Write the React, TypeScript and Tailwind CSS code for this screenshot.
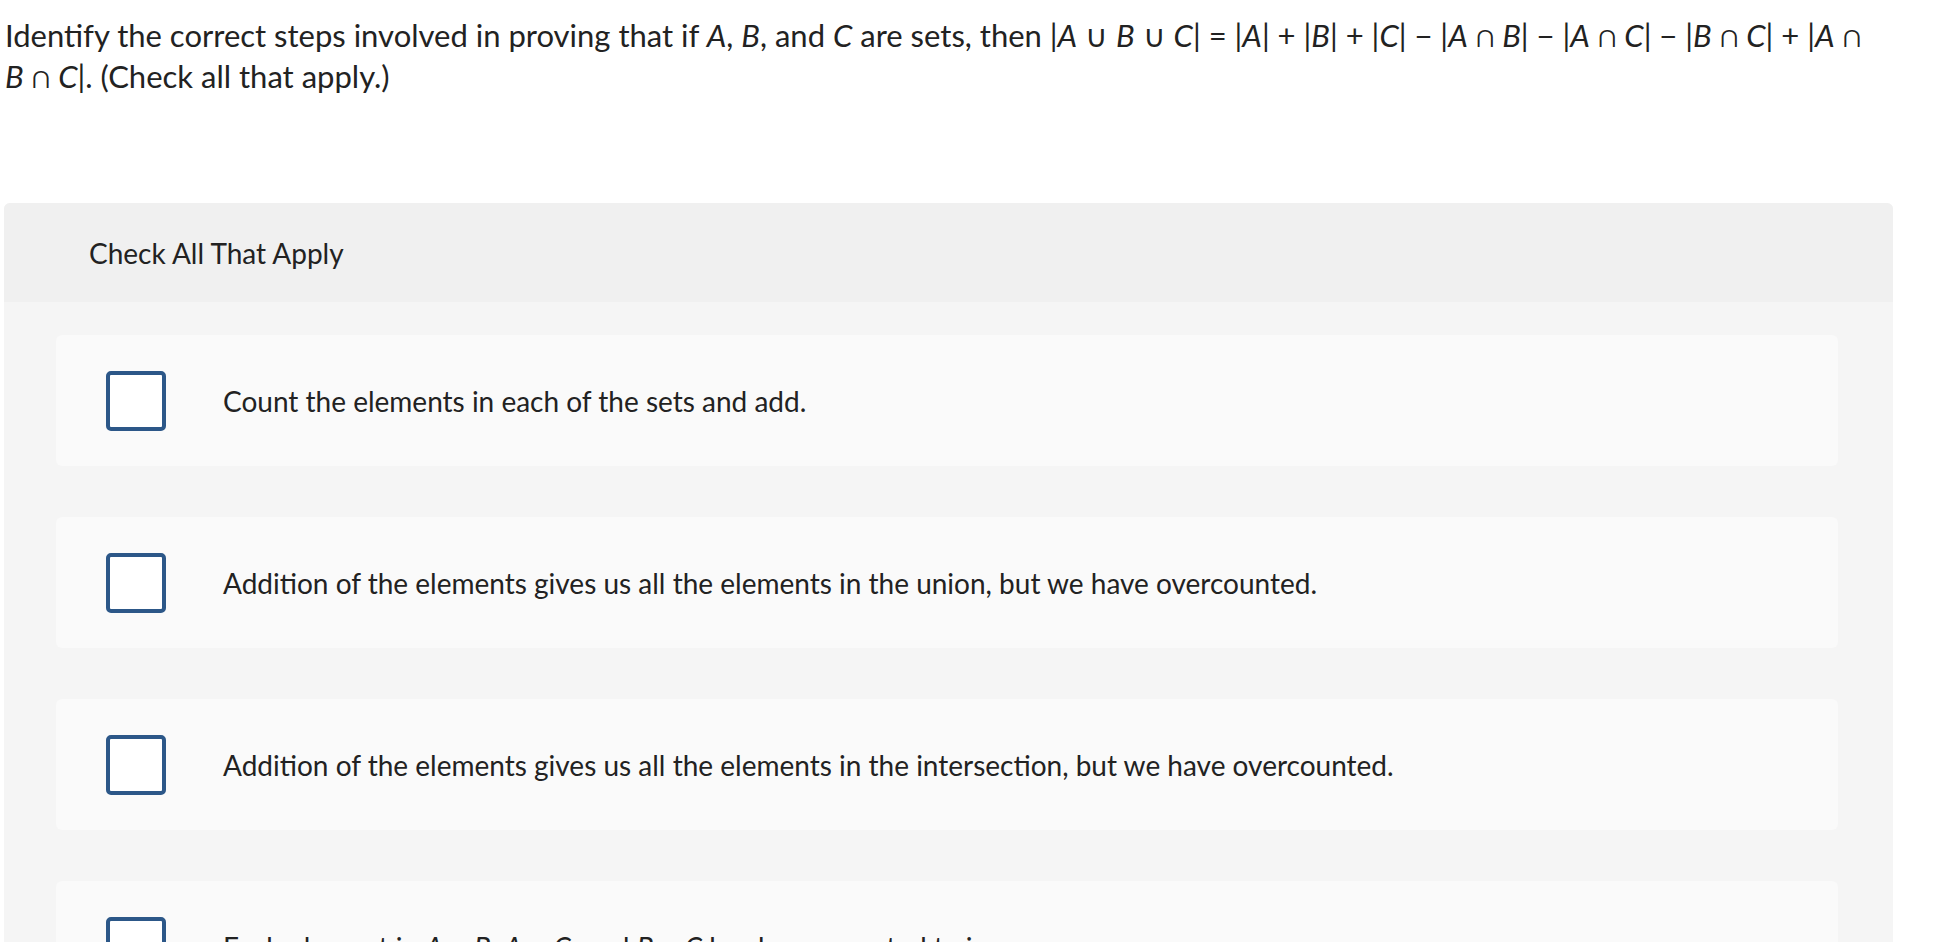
import React, { useState } from 'react';

// Small helper for the italic set letters
const V: React.FC<{ children: React.ReactNode }> = ({ children }) => (
  <i className="italic">{children}</i>
);

interface Choice {
  id: number;
  label: React.ReactNode;
}

const choices: Choice[] = [
  { id: 1, label: 'Count the elements in each of the sets and add.' },
  {
    id: 2,
    label: 'Addition of the elements gives us all the elements in the union, but we have overcounted.',
  },
  {
    id: 3,
    label: 'Addition of the elements gives us all the elements in the intersection, but we have overcounted.',
  },
  {
    id: 4,
    label: (
      <>
        Each element in <V>A</V> ∩ <V>B</V>, <V>A</V> ∩ <V>C</V>, and <V>B</V> ∩ <V>C</V> has been counted twice.
      </>
    ),
  },
];

const App: React.FC = () => {
  const [checked, setChecked] = useState<Record<number, boolean>>({});

  const toggle = (id: number) => {
    setChecked(prev => ({ ...prev, [id]: !prev[id] }));
  };

  return (
    <div className="min-h-screen bg-white text-[#222] font-['Lato','Liberation_Sans',sans-serif]">
      {/* Question */}
      <p className="pl-[5px] pt-[15px] text-[31px] leading-[41px] whitespace-nowrap">
        Identify the correct steps involved in proving that if <V>A</V>, <V>B</V>, and <V>C</V> are sets, then |<V>A</V> ∪ <V>B</V> ∪ <V>C</V>| = |<V>A</V>| + |<V>B</V>| + |<V>C</V>| − |<V>A</V> ∩ <V>B</V>| − |<V>A</V> ∩ <V>C</V>| − |<V>B</V> ∩ <V>C</V>| + |<V>A</V> ∩
        <br />
        <V>B</V> ∩ <V>C</V>|. (Check all that apply.)
      </p>

      {/* Answer panel */}
      <div className="mt-[106px] ml-[4px] w-[1889px] rounded-t-[6px] overflow-hidden bg-[#f5f5f5]">
        <div className="h-[99px] flex items-center pl-[85px] bg-[#f0f0f0] text-[28px]">
          Check All That Apply
        </div>

        <div className="pt-[33px] pl-[52px] pr-[55px] flex flex-col gap-[51px] pb-[40px]">
          {choices.map(choice => (
            <label
              key={choice.id}
              className="h-[131px] rounded-[6px] bg-[#fafafa] flex items-center pl-[50px] cursor-pointer"
            >
              <input
                type="checkbox"
                className="sr-only"
                checked={!!checked[choice.id]}
                onChange={() => toggle(choice.id)}
              />
              <span className="w-[60px] h-[60px] shrink-0 rounded-[5px] border-[4px] border-[#2c5788] bg-white flex items-center justify-center">
                {checked[choice.id] && (
                  <svg viewBox="0 0 24 24" className="w-[40px] h-[40px]" fill="none" stroke="#2c5788" strokeWidth="3">
                    <path d="M5 12l5 5L20 7" />
                  </svg>
                )}
              </span>
              <span className="ml-[57px] text-[28px]">{choice.label}</span>
            </label>
          ))}
        </div>
      </div>
    </div>
  );
};

export default App;
